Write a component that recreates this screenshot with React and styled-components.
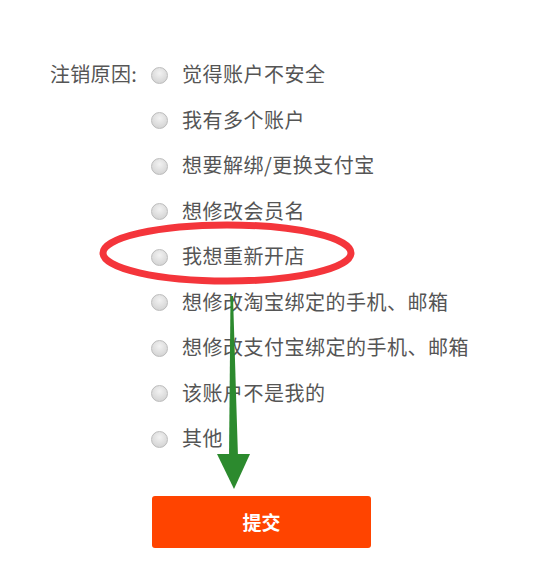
import styled, { createGlobalStyle } from "styled-components";

const GlobalStyle = createGlobalStyle`
  html, body {
    margin: 0;
    padding: 0;
    background: #fff;
  }
  body {
    font-family: "Noto Sans CJK SC", "Noto Sans", sans-serif;
  }
`;

const Page = styled.div`
  position: relative;
  width: 550px;
  height: 576px;
  overflow: hidden;
  background: #fff;
`;

const Form = styled.form`
  display: flex;
  flex-direction: column;
  padding: 51px 0 0 50px;
`;

const FieldRow = styled.div`
  display: flex;
  flex-direction: row;
  align-items: flex-start;
`;

const Label = styled.div`
  width: 101px;
  height: 45.5px;
  display: flex;
  align-items: center;
  font-size: 20px;
  letter-spacing: 0.3px;
  color: #555;
  white-space: nowrap;
`;

const Options = styled.div`
  display: flex;
  flex-direction: column;
`;

const Option = styled.label`
  display: flex;
  align-items: center;
  height: 45.5px;
  font-size: 20px;
  letter-spacing: 0.5px;
  color: #555;
  white-space: nowrap;
`;

const Radio = styled.span`
  width: 17px;
  height: 17px;
  border-radius: 50%;
  box-sizing: border-box;
  border: 1px solid #bcbcbc;
  background: radial-gradient(circle at 50% 35%, #f2f2f2 0%, #d8d8d8 70%, #c9c9c9 100%);
  margin: 3px 14px 0 0;
  flex-shrink: 0;
`;

const SubmitButton = styled.button`
  margin: 35px 0 0 102px;
  width: 219px;
  height: 52px;
  border: none;
  border-radius: 3px;
  background: #ff4400;
  color: #fff;
  font-family: "Noto Sans CJK SC", sans-serif;
  font-size: 19px;
  font-weight: 700;
  cursor: pointer;
`;

const Annotations = styled.svg`
  position: absolute;
  left: 0;
  top: 0;
  pointer-events: none;
`;

const reasons = [
  "觉得账户不安全",
  "我有多个账户",
  "想要解绑/更换支付宝",
  "想修改会员名",
  "我想重新开店",
  "想修改淘宝绑定的手机、邮箱",
  "想修改支付宝绑定的手机、邮箱",
  "该账户不是我的",
  "其他",
];

const App = () => {
  return (
    <Page>
      <GlobalStyle />
      <Form onSubmit={(e) => e.preventDefault()}>
        <FieldRow>
          <Label>注销原因:</Label>
          <Options>
            {reasons.map((reason) => (
              <Option key={reason}>
                <Radio />
                {reason}
              </Option>
            ))}
          </Options>
        </FieldRow>
        <SubmitButton type="submit">提交</SubmitButton>
      </Form>
      <Annotations width="550" height="576" viewBox="0 0 550 576">
        <ellipse
          cx="227"
          cy="253"
          rx="124"
          ry="28"
          fill="none"
          stroke="#f4353b"
          strokeWidth="7"
        />
        <polygon points="230.5,296 233,296 238,458 229,458" fill="#2c8a2e" />
        <polygon points="217,454 250,454 234,489" fill="#2c8a2e" />
      </Annotations>
    </Page>
  );
};

export default App;
